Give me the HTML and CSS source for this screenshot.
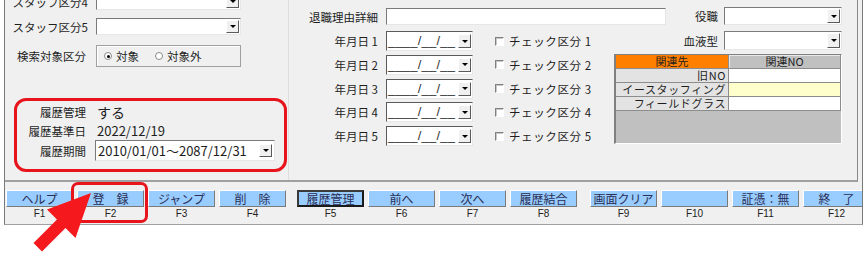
FILE: index.html
```html
<!DOCTYPE html>
<html lang="ja">
<head>
<meta charset="utf-8">
<title>履歴管理</title>
<link rel="stylesheet" href="styles.css">
</head>
<body>
<div class="window">
  <div class="panel">
    <div class="col-left">
      <div class="row staff4">
        <span class="lbl">スタッフ区分4</span>
        <div class="combo w145"><span class="dd"><i></i></span></div>
      </div>
      <div class="row staff5">
        <span class="lbl">スタッフ区分5</span>
        <div class="combo w145"><span class="dd"><i></i></span></div>
      </div>
      <div class="row search">
        <span class="lbl">検索対象区分</span>
        <div class="radiogroup">
          <span class="radio on"></span><span class="rtxt">対象</span>
          <span class="radio"></span><span class="rtxt">対象外</span>
        </div>
      </div>
      <div class="redbox">
        <div class="hrow h1">
          <span class="hlbl">履歴管理</span>
          <span class="hval">する</span>
        </div>
        <div class="hrow h2">
          <span class="hlbl">履歴基準日</span>
          <span class="hval">2022/12/19</span>
        </div>
        <div class="hrow h3">
          <span class="hlbl">履歴期間</span>
          <div class="combo period"><span class="ptxt">2010/01/01～2087/12/31</span><span class="dd"><i></i></span></div>
        </div>
      </div>
    </div>
    <div class="col-mid">
      <div class="row reason">
        <span class="lbl mlbl">退職理由詳細</span>
        <div class="textbox"></div>
      </div>
      <div class="dates">
        <div class="drow"><span class="lbl mlbl">年月日 1</span><div class="combo date"><span class="dtxt">____/__/__</span><span class="dd"><i></i></span></div><span class="chk"></span><span class="ctxt">チェック区分 1</span></div>
        <div class="drow"><span class="lbl mlbl">年月日 2</span><div class="combo date"><span class="dtxt">____/__/__</span><span class="dd"><i></i></span></div><span class="chk"></span><span class="ctxt">チェック区分 2</span></div>
        <div class="drow"><span class="lbl mlbl">年月日 3</span><div class="combo date"><span class="dtxt">____/__/__</span><span class="dd"><i></i></span></div><span class="chk"></span><span class="ctxt">チェック区分 3</span></div>
        <div class="drow"><span class="lbl mlbl">年月日 4</span><div class="combo date"><span class="dtxt">____/__/__</span><span class="dd"><i></i></span></div><span class="chk"></span><span class="ctxt">チェック区分 4</span></div>
        <div class="drow"><span class="lbl mlbl">年月日 5</span><div class="combo date"><span class="dtxt">____/__/__</span><span class="dd"><i></i></span></div><span class="chk"></span><span class="ctxt">チェック区分 5</span></div>
      </div>
    </div>
    <div class="col-right">
      <div class="rrow post">
        <span class="lbl">役職</span>
        <div class="combo w118"><span class="dd"><i></i></span></div>
      </div>
      <div class="rrow blood">
        <span class="lbl">血液型</span>
        <div class="combo w118 h19"><span class="dd"><i></i></span></div>
      </div>
      <div class="grid">
        <div class="gh orange">関連先</div>
        <div class="gh grey">関連NO</div>
        <div class="gk">旧NO</div>
        <div class="gv"></div>
        <div class="gk">イースタッフィング</div>
        <div class="gv yellow"></div>
        <div class="gk">フィールドグラス</div>
        <div class="gv"></div>
      </div>
    </div>
  </div>
  <div class="fbar">
    <div class="key"><div class="btn">ヘルプ</div><div class="fk">F1</div></div>
    <div class="key"><div class="btn">登　録</div><div class="fk">F2</div></div>
    <div class="key"><div class="btn">ジャンプ</div><div class="fk">F3</div></div>
    <div class="key"><div class="btn">削　除</div><div class="fk">F4</div></div>
    <div class="key g2"><div class="btn focus">履歴管理</div><div class="fk">F5</div></div>
    <div class="key"><div class="btn">前へ</div><div class="fk">F6</div></div>
    <div class="key"><div class="btn">次へ</div><div class="fk">F7</div></div>
    <div class="key"><div class="btn">履歴結合</div><div class="fk">F8</div></div>
    <div class="key g3"><div class="btn">画面クリア</div><div class="fk">F9</div></div>
    <div class="key"><div class="btn"></div><div class="fk">F10</div></div>
    <div class="key"><div class="btn">証憑：無</div><div class="fk">F11</div></div>
    <div class="key"><div class="btn">終　了</div><div class="fk">F12</div></div>
  </div>
</div>
<div class="mark"></div>
<svg class="arrow" width="70" height="65" viewBox="30 190 70 65" xmlns="http://www.w3.org/2000/svg">
  <polygon points="91,193 75.5,238 65.5,228 42,251.5 33.5,243 57,219.5 47,209.5" fill="#f5191e"/>
</svg>
</body>
</html>
```

FILE: styles.css
```css
body {
  margin: 0;
  background: #ffffff;
  font-family: "Noto Sans CJK JP", "Noto Sans", sans-serif;
  color: #1e1e1e;
  position: relative;
  width: 866px;
  height: 253px;
  overflow: hidden;
}

.window {
  margin-left: 4px;
  width: 859px;
  height: 225px;
  box-sizing: border-box;
  background: #f0f0f0;
  border-left: 1px solid #7a7a7a;
  border-right: 1px solid #7a7a7a;
  border-bottom: 1px solid #a0a0a0;
  overflow: hidden;
}

.panel {
  display: flex;
  width: 853px;
  height: 182px;
  box-sizing: border-box;
  border-right: 1px solid #8a8a8a;
  border-bottom: 2px solid #a0a0a0;
}

.lbl {
  flex: none;
  font-size: 11.5px;
  white-space: nowrap;
  text-align: right;
}

/* ---------- combos ---------- */
.combo {
  flex: none;
  box-sizing: border-box;
  background: #ffffff;
  border: 1px solid;
  border-color: #7a7a7a #e6e6e6 #e6e6e6 #7a7a7a;
  display: flex;
  justify-content: flex-end;
  align-items: stretch;
  padding: 1px;
}
.dd {
  width: 13px;
  flex: none;
  box-sizing: border-box;
  background: #f0f0f0;
  border: 1px solid;
  border-color: #ffffff #5a5a5a #5a5a5a #ffffff;
  display: flex;
  align-items: center;
  justify-content: center;
}
.dd i {
  width: 0;
  height: 0;
  border-left: 3px solid transparent;
  border-right: 3px solid transparent;
  border-top: 3px solid #000;
}
.w145 { width: 145px; height: 17px; }
.w118 { width: 118px; height: 18px; }
.h19 { height: 19px; }

/* ---------- left column ---------- */
.col-left {
  width: 283px;
  flex: none;
  display: flex;
  flex-direction: column;
  border-right: 1px solid #dedede;
}
.row {
  display: flex;
  align-items: center;
}
.col-left .row .lbl {
  width: 83px;
  margin-right: 8px;
}
.staff4 { margin-top: -7px; height: 17px; }
.staff5 { margin-top: 8px; height: 17px; }
.search { margin-top: 10px; height: 22px; }
.col-left .search .lbl { width: 81px; margin-right: 10px; }

.radiogroup {
  width: 145px;
  height: 22px;
  box-sizing: border-box;
  border: 1px solid #a0a0a0;
  box-shadow: inset 1px 1px 0 #ffffff;
  display: flex;
  align-items: center;
  padding-left: 7px;
  font-size: 11.5px;
}
.radio {
  width: 8px;
  height: 8px;
  box-sizing: border-box;
  border-radius: 50%;
  border: 1px solid #8a8a8a;
  background: #ffffff;
  display: flex;
  align-items: center;
  justify-content: center;
}
.radio.on::after {
  content: "";
  width: 3px;
  height: 3px;
  border-radius: 50%;
  background: #000;
}
.rtxt { margin-left: 4px; margin-right: 16px; }

.redbox {
  margin-top: 31px;
  margin-left: 9px;
  width: 273px;
  height: 74px;
  box-sizing: border-box;
  border: 3px solid #e8141c;
  border-radius: 12px;
  padding-top: 1px;
  display: flex;
  flex-direction: column;
}
.hrow {
  display: flex;
  align-items: center;
}
.h1, .h2 { height: 19px; }
.h3 { height: 21px; }
.hlbl {
  width: 69px;
  flex: none;
  text-align: right;
  font-size: 11.5px;
  margin-right: 11px;
}
.hval {
  font-size: 13px;
}
.h1 .hval { font-size: 14px; }
.period {
  width: 180px;
  height: 21px;
  margin-left: -2px;
  justify-content: space-between;
  align-items: stretch;
}
.period .dd { width: 13px; margin: 2px 1px; }
.ptxt {
  font-size: 13px;
  line-height: 17px;
  padding-left: 1px;
}

/* ---------- middle column ---------- */
.col-mid {
  width: 317px;
  flex: none;
  display: flex;
  flex-direction: column;
  padding-top: 8px;
}
.col-mid .mlbl {
  width: 89px;
  margin-right: 8px;
}
.reason { height: 17px; }
.textbox {
  width: 280px;
  height: 17px;
  flex: none;
  box-sizing: border-box;
  background: #ffffff;
  border: 1px solid;
  border-color: #7a7a7a #e6e6e6 #e6e6e6 #7a7a7a;
  position: relative;
  z-index: 1;
}
.dates {
  margin-top: 6px;
  display: flex;
  flex-direction: column;
  gap: 3.75px;
}
.drow {
  height: 20px;
  display: flex;
  align-items: center;
}
.date {
  width: 87px;
  height: 20px;
  justify-content: space-between;
  border-color: #5a5a5a #e6e6e6 #e6e6e6 #5a5a5a;
}
.date .dd { margin: 1px 0; }
.dtxt {
  font-family: "Liberation Sans", sans-serif;
  font-size: 13px;
  line-height: 15px;
  color: #333;
  letter-spacing: 0.2px;
}
.chk {
  width: 9px;
  height: 9px;
  flex: none;
  box-sizing: border-box;
  margin-left: 22px;
  border: 1px solid;
  border-color: #808080 #ffffff #ffffff #808080;
  background: #ffffff;
  box-shadow: inset 1px 1px 0 #c8c8c8;
}
.ctxt {
  margin-left: 5px;
  font-size: 11.5px;
  letter-spacing: 0.6px;
  white-space: nowrap;
}

/* ---------- right column ---------- */
.col-right {
  flex: 1;
  display: flex;
  flex-direction: column;
  padding-top: 7px;
}
.rrow {
  display: flex;
  justify-content: flex-end;
  align-items: center;
  padding-right: 15px;
}
.rrow .lbl { margin-right: 6px; }
.blood { margin-top: 6px; }
.grid {
  margin-top: 4px;
  margin-left: 8px;
  width: 228px;
  height: 90px;
  box-sizing: border-box;
  background: #c0c0c0;
  border-top: 1px solid #808080;
  border-left: 2px solid #808080;
  border-right: 1px solid #ffffff;
  border-bottom: 1px solid #ffffff;
  display: grid;
  grid-template-columns: 113px 1fr;
  grid-auto-rows: 14px;
  align-content: start;
  font-size: 11px;
}
.grid > div {
  box-sizing: border-box;
  border-right: 1px solid #8c8c8c;
  border-bottom: 1px solid #8c8c8c;
  line-height: 13px;
  white-space: nowrap;
}
.gh { text-align: center; }
.orange { background: #ff8000; }
.grey { background: #c0c0c0; box-shadow: inset 1px 1px 0 #e8e8e8; }
.gk {
  background: #e3e3e3;
  text-align: right;
  padding-right: 2px;
  letter-spacing: 0.6px;
}
.gv { background: #ffffff; }
.gv.yellow { background: #ffffcc; }

/* ---------- function bar ---------- */
.fbar {
  display: flex;
  gap: 4px;
  padding-top: 8px;
  padding-left: 1px;
}
.key {
  width: 67px;
  flex: none;
  display: flex;
  flex-direction: column;
  align-items: center;
}
.key.g2 { margin-left: 7px; }
.key.g3 { margin-left: 9px; }
.btn {
  width: 100%;
  height: 17px;
  box-sizing: border-box;
  background: #99ccff;
  border: 1px solid;
  border-color: #ffffff #7a7a7a #7a7a7a #ffffff;
  font-size: 12px;
  line-height: 15px;
  text-align: center;
  color: #2a2f55;
  white-space: nowrap;
}
.btn.focus {
  border: 2px solid;
  border-color: #3a3a3a #1a1a1a #1a1a1a #3a3a3a;
  line-height: 13px;
}
.fk {
  font-family: "Liberation Sans", sans-serif;
  font-size: 10px;
  line-height: 12px;
  margin-top: 1px;
  color: #222;
}

/* ---------- annotations ---------- */
.mark {
  position: absolute;
  left: 71px;
  top: 182px;
  width: 77px;
  height: 41px;
  box-sizing: border-box;
  border: 3px solid #e8141c;
  border-radius: 7px;
}
.arrow {
  position: absolute;
  left: 30px;
  top: 190px;
  width: 70px;
  height: 65px;
}
```
